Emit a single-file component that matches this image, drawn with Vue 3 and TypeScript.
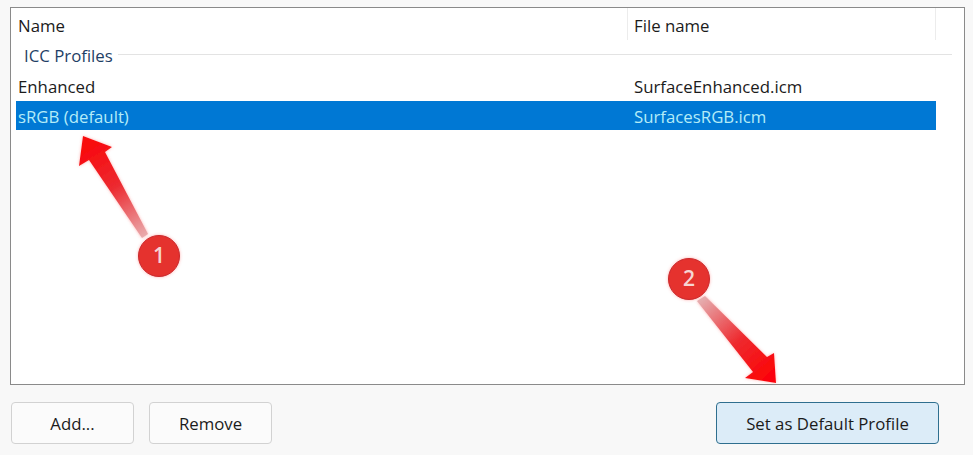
<script setup lang="ts">
interface Row { name: string; file: string; selected?: boolean }
const rows: Row[] = [
  { name: 'Enhanced', file: 'SurfaceEnhanced.icm' },
  { name: 'sRGB (default)', file: 'SurfacesRGB.icm', selected: true },
]
</script>

<template>
  <div class="page">
    <section class="frame">
      <header class="head">
        <div class="col-name">Name</div>
        <div class="col-file">File name</div>
      </header>
      <div class="group">
        <span class="group-label">ICC Profiles</span>
        <span class="group-line"></span>
      </div>
      <div v-for="r in rows" :key="r.name" class="row" :class="{ selected: r.selected }">
        <div class="cell-name">{{ r.name }}</div>
        <div class="cell-file">{{ r.file }}</div>
      </div>
    </section>
    <footer class="actions">
      <button class="btn">Add...</button>
      <button class="btn">Remove</button>
      <button class="btn primary">Set as Default Profile</button>
    </footer>

    <svg class="marks" width="973" height="455" viewBox="0 0 973 455">
      <defs>
        <linearGradient id="a1" gradientUnits="userSpaceOnUse" x1="90" y1="145" x2="146" y2="238">
          <stop offset="0" stop-color="#f80a0e" />
          <stop offset="0.45" stop-color="#ec2a30" />
          <stop offset="1" stop-color="#e9b0b2" />
        </linearGradient>
        <linearGradient id="a2" gradientUnits="userSpaceOnUse" x1="768" y1="376" x2="701" y2="298">
          <stop offset="0" stop-color="#fb0508" />
          <stop offset="0.45" stop-color="#ee2a2f" />
          <stop offset="1" stop-color="#e5b0b2" />
        </linearGradient>
        <filter id="glow" x="-30%" y="-30%" width="160%" height="160%">
          <feDropShadow dx="0" dy="0" stdDeviation="1.6" flood-color="#ff5a5a" flood-opacity="0.5" />
        </filter>
      </defs>
      <path d="M83 136 L112 147 L105 152 L148 234 L142 238 L89 160 L79 166 Z" fill="url(#a1)" filter="url(#glow)" />
      <circle cx="159" cy="256" r="20.5" fill="#e5302f" stroke="#c92a2c" stroke-width="1" filter="url(#glow)" />
      <text x="159" y="263" class="num">1</text>

      <path d="M776 383 L745 378 L753 372 L697 301 L705 296 L767 357 L774 353 Z" fill="url(#a2)" filter="url(#glow)" />
      <circle cx="689" cy="279" r="20.5" fill="#e5302f" stroke="#c92a2c" stroke-width="1" filter="url(#glow)" />
      <text x="689" y="286" class="num">2</text>
    </svg>
  </div>
</template>

<style>
html, body { margin: 0; padding: 0; }
</style>

<style scoped>
.page {
  position: relative;
  width: 973px;
  height: 455px;
  box-sizing: border-box;
  padding: 7px 8px 0 10px;
  background: #f8f8f8;
  font-family: "Open Sans", "Noto Sans", sans-serif;
  font-size: 16.8px;
  color: #1b1b1b;
  overflow: hidden;
}
.frame {
  box-sizing: border-box;
  height: 378px;
  background: #fff;
  border: 1px solid #8a8a8a;
  padding-left: 5px;
}
.head {
  display: flex;
  height: 32px;
  width: 920px;
}
.col-name {
  width: 611px;
  padding-left: 2px;
  box-sizing: border-box;
  line-height: 36px;
  height: 32px;
}
.col-file {
  flex: 1;
  box-sizing: border-box;
  padding-left: 6px;
  line-height: 36px;
  height: 32px;
  border-left: 1px solid #ececec;
  border-right: 1px solid #ececec;
}
.group {
  display: flex;
  align-items: center;
  height: 31px;
  padding-left: 8px;
  width: 936px;
  box-sizing: border-box;
}
.group-label {
  color: #1f3f66;
  line-height: 31px;
  margin-right: 5px;
}
.group-line {
  flex: 1;
  height: 1px;
  background: #e3e3e3;
  margin-top: -3px;
}
.row {
  display: flex;
  width: 920px;
  height: 30px;
  line-height: 31px;
}
.cell-name { width: 618px; padding-left: 2px; box-sizing: border-box; }
.cell-file { flex: 1; }
.selected {
  background: #0078d4;
  color: #b4ecf8;
  height: 29px;
  line-height: 31px;
}
.actions {
  display: flex;
  margin-top: 17px;
  padding-left: 1px;
  gap: 15px;
}
.btn {
  box-sizing: border-box;
  width: 123px;
  height: 42px;
  background: #fbfbfb;
  border: 1px solid #d2d2d2;
  border-radius: 4px;
  font: inherit;
  color: #1b1b1b;
  padding: 0;
}
.primary {
  width: 223px;
  margin-left: 429px;
  background: #dcecf8;
  border-color: #2f6f8f;
}
.marks {
  position: absolute;
  left: 0;
  top: 0;
  pointer-events: none;
}
.num {
  fill: #f6d5d3;
  font-size: 21px;
  font-weight: 600;
  text-anchor: middle;
}
</style>
